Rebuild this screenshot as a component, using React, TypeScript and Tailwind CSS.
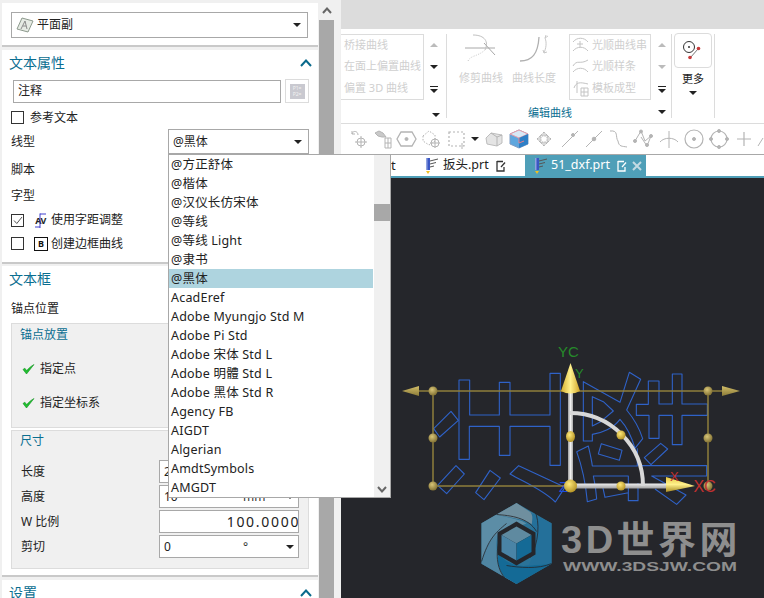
import React from "react";

const FONT = "font-['Noto_Sans','Noto_Sans_CJK_SC',sans-serif]";

const Tri = ({ c = "#222", w = 8, h = 4 }: { c?: string; w?: number; h?: number }) => (
  <svg width={w} height={h} viewBox="0 0 8 4" className="block shrink-0">
    <path d="M0 0H8L4 4Z" fill={c} />
  </svg>
);
const TriUp = ({ c = "#bbb" }: { c?: string }) => (
  <svg width={8} height={4} viewBox="0 0 8 4" className="block shrink-0">
    <path d="M0 4H8L4 0Z" fill={c} />
  </svg>
);
const TriBar = () => (
  <svg width={8} height={7} viewBox="0 0 8 7" className="block shrink-0">
    <path d="M0 0H8V1H0Z M0 3H8L4 7Z" fill="#222" />
  </svg>
);
const Chevron = () => (
  <svg width={12} height={8} viewBox="0 0 12 8" className="block">
    <path d="M1 7L6 1.5L11 7" fill="none" stroke="#0a6a8c" strokeWidth="2" />
  </svg>
);
const Check = () => (
  <svg width={13} height={12} viewBox="0 0 13 12" className="block">
    <path d="M1 6.5L4.5 11L12 1.5C8.5 3.5 6.5 5.5 4.7 7.6L2.8 5.2Z" fill="#20c030" stroke="#129020" strokeWidth=".6" />
  </svg>
);
const Box = ({ checked = false }: { checked?: boolean }) => (
  <span className="flex h-[13px] w-[13px] shrink-0 items-center justify-center border border-[#333] bg-white">
    {checked && (
      <svg width={10} height={9} viewBox="0 0 10 9">
        <path d="M1 4.5L3.8 7.5L9 1" fill="none" stroke="#555" strokeWidth="1" />
      </svg>
    )}
  </span>
);

const PlaneIcon = () => (
  <svg width={18} height={18} viewBox="0 0 18 18" className="block shrink-0">
    <path d="M6 2L17 5L12 16L1 13Z" fill="#e6ebe4" stroke="#8d9a8d" />
    <path d="M5 13L9 5L11 13M7 10H10" fill="none" stroke="#8a8a8a" />
  </svg>
);

const Section = ({ title, children, h, chevron = true, head = "h-[26px]" }: { title: string; children?: React.ReactNode; h: string; chevron?: boolean; head?: string }) => (
  <section className={`${h} shrink-0 border-b-2 border-b-[#c9c9c9] bg-white`}>
    <div className={`flex ${head} items-start justify-between pl-[7px] pr-[6px] pt-[3px]`}>
      <span className="text-[14px] leading-[20px] text-[#0a6e90]">{title}</span>
      {chevron && <span className="pt-[6px]"><Chevron /></span>}
    </div>
    {children}
  </section>
);

const FieldRow = ({ label, value, unit, arrow, clipped }: { label: string; value?: string; unit?: string; arrow?: boolean; clipped?: boolean }) => (
  <div className="flex h-[25px] items-center pl-[9px] pr-[9px]">
    <span className="w-[139px] text-[12px] text-[#222]">{label}</span>
    <div className={`flex h-[23px] w-[141px] items-center overflow-hidden whitespace-nowrap border border-[#a8a8a8] bg-white text-[#222] ${clipped ? "pl-[67px] text-[14px] tracking-[1.7px]" : "pl-[4px] pr-[4px] text-[12px]"}`}>
      <span className={clipped ? "" : "w-[79px]"}>{value}</span>
      {unit && <span className="text-[#333]">{unit}</span>}
      {arrow && <span className="ml-auto"><Tri /></span>}
    </div>
  </div>
);

function LeftPanel() {
  return (
    <div className="flex w-[319px] shrink-0 flex-col bg-[#f0f0f0] pl-[2px] pr-[1px] pt-[3px]">
      <div className="h-[44px] shrink-0 border-b-2 border-b-[#c9c9c9] bg-white pl-[9px] pr-[10px] pt-[9px]">
        <div className="flex h-[26px] items-center border border-[#a8a8a8] pl-[4px] pr-[6px] text-[12px] text-[#222]">
          <PlaneIcon />
          <span className="ml-[3px]">平面副</span>
          <span className="ml-auto"><Tri c="#222" /></span>
        </div>
      </div>
      <div className="h-[3px] shrink-0" />
      <Section title="文本属性" h="h-[214px]" head="h-[29px]">
        <div className="flex h-[24px] items-center gap-[4px] pl-[11px] pr-[9px]">
          <div className="flex h-[23px] flex-1 items-center border border-[#a8a8a8] pl-[4px] text-[12px] text-[#222]">注释</div>
          <div className="flex h-[24px] w-[24px] items-center justify-center border border-[#dcdcdc]">
            <div className="flex h-[15px] w-[15px] flex-col items-center justify-center bg-[#c9c9d0] text-[5px] leading-[6px] text-[#f2f2f2]">
              <span>P1=</span>
              <span>P2=</span>
            </div>
          </div>
        </div>
        <div className="flex h-[26px] items-center gap-[6px] pl-[9px] pt-[3px] text-[12px] text-[#222]">
          <Box />
          <span>参考文本</span>
        </div>
        <div className="flex h-[25px] items-center pl-[9px] pr-[9px] text-[12px] text-[#222]">
          <span className="w-[157px]">线型</span>
          <div className="flex h-[25px] flex-1 items-center justify-between border border-[#a8a8a8] pl-[4px] pr-[6px]">
            <span>@黑体</span>
            <Tri />
          </div>
        </div>
        <div className="flex h-[28px] items-center pl-[9px] pt-[3px] text-[12px] text-[#222]">脚本</div>
        <div className="flex h-[26px] items-center pl-[9px] pt-[1px] text-[12px] text-[#222]">字型</div>
        <div className="flex h-[24px] items-center pl-[9px] text-[12px] text-[#222]">
          <Box checked />
          <span className="relative ml-[9px] flex h-[15px] w-[15px] items-center justify-center text-[9px] font-bold leading-none tracking-[-.5px] text-[#222]">
            AV
            <svg width={15} height={15} viewBox="0 0 15 15" className="absolute left-0 top-0 block">
              <path d="M7 .5V15M7 1H13M7 14H2" fill="none" stroke="#2a2ac8" strokeWidth=".9" />
            </svg>
          </span>
          <span className="ml-[3px]">使用字距调整</span>
        </div>
        <div className="flex h-[23px] items-center pl-[9px] text-[12px] text-[#222]">
          <Box />
          <span className="ml-[10px] flex h-[14px] w-[14px] items-center justify-center border border-[#111] text-[9px] font-bold leading-none text-[#111]">B</span>
          <span className="ml-[3px]">创建边框曲线</span>
        </div>
      </Section>
      <div className="h-[2px] shrink-0" />
      <Section title="文本框" h="h-[311px]" chevron={false}>
        <div className="flex h-[31px] items-center pl-[9px] pt-[2px] text-[12px] text-[#222]">锚点位置</div>
        <div className="mx-[9px] flex h-[105px] flex-col border border-[#dcdcdc] bg-[#f0f0f0]">
          <div className="pl-[8px] pt-[1px] text-[12px] leading-[20px] text-[#0a6e90]">锚点放置</div>
          <div className="mt-[14px] flex h-[20px] items-center gap-[5px] pl-[10px] text-[12px] text-[#222]"><Check />指定点</div>
          <div className="mt-[14px] flex h-[20px] items-center gap-[5px] pl-[10px] text-[12px] text-[#222]"><Check />指定坐标系</div>
        </div>
        <div className="mx-[9px] mt-[2px] flex h-[139px] flex-col border border-[#dcdcdc] bg-[#f0f0f0]">
          <div className="h-[28px] shrink-0 pl-[8px] text-[12px] leading-[20px] text-[#0a6e90]">尺寸</div>
          <FieldRow label="长度" value="2" unit="mm" arrow />
          <FieldRow label="高度" value="10" unit="mm" arrow />
          <FieldRow label="W 比例" value="100.0000" clipped />
          <FieldRow label="剪切" value="0" unit="°" arrow />
        </div>
      </Section>
      <div className="h-[3px] shrink-0" />
      <Section title="设置" h="h-[40px]" />
    </div>
  );
}

const S = "#b4b4b4";
const I = ({ children, w = 22 }: { children: React.ReactNode; w?: number }) => (
  <svg width={w} height={22} viewBox="0 0 22 22" fill="none" stroke={S} strokeWidth="1" className="block shrink-0">
    {children}
  </svg>
);

function Toolbar() {
  return (
    <div className="flex h-[32px] shrink-0 items-center overflow-hidden border-b border-t border-b-[#a8a8a8] border-t-[#dcdcdc] bg-white pl-[7px]">
      <div className="flex w-[134px] shrink-0 items-center">
        <div className="w-[25px]"><I><path d="M4 6C5 2 10 3 10 7M4 6L4 3M4 6L7 6" /><circle cx="13" cy="14" r="4" /><path d="M13 8V20M7 14H19" /></I></div>
        <div className="w-[23px]"><I><path d="M2 5L6 3L10 5L13 9L9 9L5 8Z" fill="#c9c9c9" /><path d="M12 10H18V20H12ZM15 10V20M12 15H18" /></I></div>
        <div className="w-[24px]"><I><path d="M5 4H16L20 11L16 18H5L1 11Z" strokeWidth="1.3" /><circle cx="10.500" cy="11" r="1.500" fill={S} /></I></div>
        <div className="w-[27px]"><I><path d="M3 8L9 3L15 7V13L9 17L3 13Z" strokeDasharray="1.500 1.500" /><circle cx="15" cy="15" r="4" /><path d="M15 10V20M10 15H20" /></I></div>
        <div className="w-[24px]"><I><path d="M2 4H17V18H2Z" strokeDasharray="2 2" strokeWidth="1.200" /><path d="M15 15V21" /></I></div>
        <Tri />
      </div>
      <div className="ml-[1px] w-[25px] shrink-0"><I><path d="M3 10L8 5L19 7V15L14 18L4 16Z" fill="#e4e4e4" stroke="#bdbdbd" /><path d="M8 5L14 9V18M14 9L19 7" /></I></div>
      <div className="w-[25px] shrink-0">
        <svg width={22} height={22} viewBox="0 0 22 22" className="block">
          <path d="M11 2L20 6V16L11 20L2 16V6Z" fill="#5ea6de" stroke="#7f9cc4" />
          <path d="M2 6L11 10L20 6L11 2Z" fill="#d8e8f6" stroke="#e79ca8" />
          <path d="M11 10V20L20 16V6Z" fill="#2e7fc6" />
          <path d="M11 10V15L16 13" fill="none" stroke="#e8808c" />
        </svg>
      </div>
      <div className="w-[26px] shrink-0"><I><path d="M4 11L8 7L8 15ZM18 11L14 7L14 15ZM11 4L7 8H15ZM11 18L7 14H15Z" strokeDasharray="1.500 1" fill="#d9d9d9" /></I></div>
      <div className="w-[24px] shrink-0"><I><path d="M3 19L19 3" /><circle cx="14" cy="7" r="1.500" fill={S} /></I></div>
      <div className="w-[24px] shrink-0"><I><path d="M3 19L19 3" /><circle cx="11" cy="11" r="1.800" fill={S} /></I></div>
      <div className="w-[25px] shrink-0"><I><path d="M3 3C12 2 8 9 11 13C12 19 15 18 20 19" /></I></div>
      <div className="w-[26px] shrink-0"><I><path d="M3 13L9 3L13 13L19 8L15 18L9 9" /><circle cx="9" cy="3.500" r="1.500" fill={S} /><circle cx="3" cy="13" r="1.500" fill={S} /><circle cx="19" cy="8" r="1.500" fill={S} /><circle cx="15" cy="17" r="1.500" fill={S} /></I></div>
      <div className="w-[25px] shrink-0"><I><path d="M2 14C6 9 16 9 20 14M11 3V20" /></I></div>
      <div className="w-[25px] shrink-0"><I><circle cx="11" cy="11" r="9" strokeWidth="1.200" /><circle cx="11" cy="11" r="1.500" fill={S} /></I></div>
      <div className="w-[25px] shrink-0"><I><circle cx="11" cy="11" r="8" strokeWidth="1.200" /><circle cx="11" cy="3" r="1.500" fill={S} /><circle cx="3" cy="11" r="1.500" fill={S} /><circle cx="19" cy="11" r="1.500" fill={S} /><circle cx="11" cy="19" r="1.500" fill={S} /></I></div>
      <div className="w-[24px] shrink-0"><I><path d="M11 4V18M4 11H18" strokeWidth="1.200" /></I></div>
      <div className="w-[22px] shrink-0"><I><path d="M1 18L6 10" /></I></div>
    </div>
  );
}

const RibbonText = ({ children, h = "h-[22px]" }: { children: React.ReactNode; h?: string }) => (
  <div className={`flex ${h} items-center whitespace-nowrap pl-[3px] text-[11px] text-[#cfcfcf]`}>{children}</div>
);

const SmallCurve = ({ d }: { d: string }) => (
  <svg width={18} height={18} viewBox="0 0 18 18" fill="none" stroke="#c4c4c4" className="block shrink-0">
    <path d={d} />
  </svg>
);

function Ribbon() {
  return (
    <div className="flex h-[94px] shrink-0 items-stretch bg-white pt-[5px]">
      <div className="flex h-[84px] w-[106px] shrink-0 border-r border-r-[#dcdcdc]">
        <div className="flex w-[83px] flex-col">
          <div className="h-[66px] border border-l-0 border-[#dcdcdc]">
            <RibbonText h="h-[20px]">桥接曲线</RibbonText>
            <RibbonText>在面上偏置曲线</RibbonText>
            <RibbonText>偏置 3D 曲线</RibbonText>
          </div>
        </div>
        <div className="flex w-[22px] flex-col items-center pl-[1px]">
          <div className="flex h-[22px] items-center pr-[4px]"><TriUp /></div>
          <div className="flex h-[22px] items-center pr-[4px]"><Tri /></div>
          <div className="flex h-[22px] items-center pr-[4px]"><TriBar /></div>
          <div className="mt-[12px] flex h-[6px] items-center"><Tri /></div>
        </div>
      </div>
      <div className="flex h-[84px] w-[225px] shrink-0 flex-col border-r border-r-[#dcdcdc]">
        <div className="flex h-[66px] items-start">
          <div className="ml-[11px] flex w-[46px] flex-col items-center">
            <svg width={32} height={29} viewBox="0 0 32 29" fill="none" className="block">
              <path d="M0 14H30" stroke="#a8a8a8" />
              <path d="M8 1C20 1 24 8 20 16" stroke="#c0c0c0" />
              <path d="M19 9L30 21" stroke="#a8a8a8" />
              <path d="M3 27C6 21 12 23 20 16" stroke="#c8c8c8" strokeDasharray="1 1.500" />
            </svg>
            <span className="mt-[7px] whitespace-nowrap text-[11px] text-[#cfcfcf]">修剪曲线</span>
          </div>
          <div className="ml-[7px] flex w-[46px] flex-col items-center">
            <svg width={32} height={29} viewBox="0 0 32 29" fill="none" className="block">
              <path d="M2 27C14 27 20 20 21 3" stroke="#b0b0b0" strokeWidth="1.300" />
              <path d="M27 4L30 2M27 4L28 1M27 4C29 9 28 14 26 19M26 19L25 16M26 19L29 18" stroke="#c8c8c8" />
            </svg>
            <span className="mt-[7px] whitespace-nowrap text-[11px] text-[#cfcfcf]">曲线长度</span>
          </div>
          <div className="ml-[12px] flex h-[66px] w-[82px] flex-col border border-[#dcdcdc]">
            <div className="flex h-[20px] items-center gap-[2px] whitespace-nowrap pl-[2px] text-[11px] text-[#cfcfcf]"><SmallCurve d="M1 6C5 1 12 1 16 6M1 15C5 10 12 10 16 15M8 5V12M5 8H11" />光顺曲线串</div>
            <div className="flex h-[22px] items-center gap-[2px] whitespace-nowrap pl-[2px] text-[11px] text-[#cfcfcf]"><SmallCurve d="M1 9C5 2 8 8 16 3M1 15C5 10 12 10 16 15" />光顺样条</div>
            <div className="flex h-[22px] items-center gap-[2px] whitespace-nowrap pl-[2px] text-[11px] text-[#cfcfcf]"><SmallCurve d="M2 9C4 3 8 3 16 5M5 2V14M9 9H16V17H9ZM9 13H16M12 9V17" />模板成型</div>
          </div>
          <div className="ml-[3px] flex w-[16px] flex-col items-center">
            <div className="flex h-[22px] items-center"><TriUp /></div>
            <div className="flex h-[22px] items-center"><Tri c="#bbb" /></div>
            <div className="flex h-[22px] items-center"><TriBar /></div>
          </div>
        </div>
        <div className="flex flex-1 items-center">
          <span className="ml-[81px] mt-[5px] w-[44px] whitespace-nowrap text-center text-[11px] text-[#0a6e90]">编辑曲线</span>
          <span className="ml-[86px] mt-[3px]"><Tri /></span>
        </div>
      </div>
      <div className="flex h-[84px] w-[43px] shrink-0 flex-col items-center border-r border-r-[#dcdcdc]">
        <div className="-mt-[1px] flex h-[35px] w-[38px] items-center justify-center rounded-[4px] border border-[#dcdcdc]">
          <svg width={20} height={20} viewBox="0 0 20 20" fill="none" className="block">
            <circle cx="6" cy="6" r="5.500" stroke="#333" />
            <circle cx="6" cy="6" r="1" fill="#333" />
            <path d="M7 17L15 8" stroke="#777" />
            <circle cx="7" cy="16.500" r="1.800" fill="#c83c3c" />
            <circle cx="15.500" cy="7.500" r="1.800" fill="#c83c3c" />
          </svg>
        </div>
        <span className="mt-[2px] text-[11px] leading-[18px] text-[#222]">更多</span>
        <span className="mt-[3px]"><Tri /></span>
      </div>
    </div>
  );
}

const FileIcon = () => (
  <svg width={16} height={18} viewBox="0 0 16 18" className="block shrink-0">
    <path d="M3 1H7V13H3Z" fill="#3a57c4" />
    <path d="M3 1H4.500V13H3Z" fill="#8fa2e0" />
    <path d="M7 4L15 2M7 7L13 5.500M7 10L11 9" stroke="#555" fill="none" />
    <path d="M3 14H7L5 17Z" fill="#f0c020" />
  </svg>
);
const DocIcon = ({ c }: { c: string }) => (
  <svg width={12} height={12} viewBox="0 0 12 12" fill="none" stroke={c} strokeWidth="1.300" className="block shrink-0">
    <path d="M2 1.500H8M2 1V11H9V7" />
    <path d="M6 7L10 2.500" />
  </svg>
);

function Tabs() {
  return (
    <div className="flex h-[23px] shrink-0 border-b-2 border-b-[#4f9fb8] bg-white">
      <div className="h-[23px] w-[33px] shrink-0 bg-white" />
      <div className="flex h-[23px] w-[17px] shrink-0 items-start justify-center bg-[#f0f0f0] pt-[6px]">
        <svg width={10} height={7} viewBox="0 0 10 7"><path d="M1 6L5 1.500L9 6" fill="none" stroke="#555" strokeWidth="2" /></svg>
      </div>
      <span className="w-[32px] text-[13px] leading-[21px] text-[#222]">t</span>
      <div className="flex w-[102px] items-center text-[12.500px] text-[#222]">
        <FileIcon />
        <span className="ml-[4px]">扳头.prt</span>
        <span className="ml-[6px]"><DocIcon c="#333" /></span>
      </div>
      <div className="flex h-[21px] w-[121px] items-center bg-[#4f9fb8] pl-[7px] text-[12.500px] text-white">
        <FileIcon />
        <span className="ml-[3px]">51_dxf.prt</span>
        <span className="ml-[6px]"><DocIcon c="#fff" /></span>
        <svg width={10} height={10} viewBox="0 0 10 10" className="ml-[4px] block">
          <path d="M1 1L9 9M9 1L1 9" stroke="#c4dbe3" strokeWidth="2" />
        </svg>
      </div>
    </div>
  );
}

const Ball = ({ x, y, r = 4.500, id = "tan" }: { x: number; y: number; r?: number; id?: string }) => (
  <circle cx={x} cy={y} r={r} fill={`url(#${id})`} />
);

function Scene() {
  return (
    <svg viewBox="341 178 423 420" className="block h-full w-full">
      <defs>
        <radialGradient id="tan" cx="40%" cy="35%" r="70%">
          <stop offset="0" stopColor="#d8c577" />
          <stop offset="1" stopColor="#7d6c30" />
        </radialGradient>
        <radialGradient id="yel" cx="40%" cy="35%" r="70%">
          <stop offset="0" stopColor="#ffe97a" />
          <stop offset="1" stopColor="#b08e20" />
        </radialGradient>
        <linearGradient id="cone" x1="0" x2="1" y1="0" y2="0">
          <stop offset="0" stopColor="#d4ae30" />
          <stop offset=".5" stopColor="#fff08c" />
          <stop offset="1" stopColor="#d0a428" />
        </linearGradient>
        <linearGradient id="coneX" x1="0" x2="0" y1="0" y2="1">
          <stop offset="0" stopColor="#e8c840" />
          <stop offset=".5" stopColor="#fff08c" />
          <stop offset="1" stopColor="#a88a20" />
        </linearGradient>
        <linearGradient id="coneT" x1="0" x2="0" y1="0" y2="1">
          <stop offset="0" stopColor="#d2bd68" />
          <stop offset="1" stopColor="#8a7a38" />
        </linearGradient>
        <linearGradient id="axisV" x1="0" x2="1" y1="0" y2="0">
          <stop offset="0" stopColor="#9c9c9c" />
          <stop offset=".5" stopColor="#f0f0f0" />
          <stop offset="1" stopColor="#a8a8a8" />
        </linearGradient>
        <linearGradient id="axisH" x1="0" x2="0" y1="0" y2="1">
          <stop offset="0" stopColor="#f0f0f0" />
          <stop offset="1" stopColor="#a0a0a0" />
        </linearGradient>
      </defs>
      <rect x="341" y="178" width="423" height="420" fill="#25262b" />

      <g transform="translate(400 340) scale(.33333)" fill="none" stroke="#2f62c8" strokeWidth="3.300" strokeLinejoin="round">
        <path d="M177 120H209V225H298V127H330V225H450V100H481V376H450V259H330V346H298V259H208V358H177Z" />
        <path d="M153 214L175 241L119 291L101 266Z" />
        <path d="M168 377L193 402L140 461L113 436Z" />
        <path d="M270 391L301 414L252 479L227 458Z" />
        <path d="M356 377L495 442L466 486C430 450 380 430 330 402Z" />
      </g>
      <g transform="translate(560 340) scale(.33333)" fill="none" stroke="#2f62c8" strokeWidth="3.300" strokeLinejoin="round">
        <path d="M70 125L180 187L208 97L242 118L200 210C225 240 240 270 248 296L225 325C215 290 200 260 180 238C160 265 125 280 97 283V303H70Z" />
        <path d="M97 170L130 185L160 213L122 245L97 258Z" />
        <path d="M229 193H265V123H297V192H337V102H366V192H442V226H366V314H337V226H297V295H267V226H229Z" />
        <path d="M124 311L186 331L178 361L115 342Z" />
        <path d="M302 310L323 327L273 374L253 353Z" />
        <path d="M50 335L85 318C90 340 95 360 97 378H232V325M245 377H440V408H275L378 465L350 493L285 447" />
        <path d="M50 335C70 390 78 440 82 485L110 477C108 450 104 425 100 408H205V482H234V430M205 458L135 472L128 440" />
      </g>

      <path d="M415 391H725M433 391V486H570M708 391V486" fill="none" stroke="#8f7f3c" strokeWidth="1.500" />
      <path d="M402 391L419 386V396Z" fill="url(#coneT)" />
      <path d="M740 391L722 386V396Z" fill="url(#coneT)" />
      <Ball x={433} y={391} />
      <Ball x={433} y={438} />
      <Ball x={433} y={486} />
      <Ball x={708} y={391} />
      <Ball x={708} y={438} />
      <Ball x={708} y={486} />

      <rect x="568" y="392" width="5" height="94" fill="url(#axisV)" />
      <rect x="570" y="483.500" width="98" height="5" fill="url(#axisH)" />
      <path d="M570 413A73 73 0 0 1 643 486" stroke="#d8d8d8" strokeWidth="4" fill="none" />
      <path d="M570.500 363L561 391Q570.500 396 580 391Z" fill="url(#cone)" />
      <path d="M695 486L666 477V492Z" fill="url(#coneX)" />
      <ellipse cx="570.500" cy="436.500" rx="4.500" ry="5.500" fill="url(#yel)" />
      <Ball x={621} y={435} id="yel" />
      <Ball x={621} y={486} id="yel" />
      <text x="558" y="357" fontSize="15" fill="#258a2a" fontFamily="Liberation Sans, sans-serif">YC</text>
      <text x="575" y="378" fontSize="13" fill="#258a2a" fontFamily="Liberation Sans, sans-serif">Y</text>
      <text x="670" y="481" fontSize="13" fill="#c03030" fontFamily="Liberation Sans, sans-serif">X</text>
      <text x="693.500" y="492" fontSize="16" fill="#c03030" fontFamily="Liberation Sans, sans-serif">XC</text>
      <text x="559" y="492" fontSize="15" fill="#1c4ce0" fontFamily="Liberation Sans, sans-serif">Z</text>
      <Ball x={570.5} y={486} r={6.5} id="yel" />

      <g transform="translate(516.500 543.500)">
        <path d="M0 -40.500L35 -20.250L35 20.250L0 40.500L-35 20.250L-35 -20.250Z" fill="#2b7398" />
        <path d="M0 -40.500L-20 -29C-10 -26 6 -26 18 -18L16 -30Z" fill="#6f8f9f" />
        <path d="M-35 -20.250L-20 -29C-10 -26 2 -25 10 -20L-16 -10C-24 -8 -32 8 -35 20.250Z" fill="#5c8da6" />
        <path d="M-35 20.250C-32 8 -26 -6 -18 -10C-22 0 -20 14 -14 24L-4 36L0 40.500Z" fill="#4f85a2" />
        <path d="M0 40.500L-12 33.500C-18 26 -20 18 -18 8C-14 18 -2 24 12 22L35 20.250Z" fill="#146a96" />
        <path d="M35 20.250L12 22C18 12 20 -2 16 -14C14 -22 18 -26 14 -31L35 -20.250Z" fill="#24709a" />
        <path d="M-20 -29C-6 -28 12 -26 20 -12M18 -33C24 -22 22 0 14 14M35 20C22 26 2 24 -10 22M-12 34C-22 22 -20 4 -16 -8M-35 18C-28 -4 -22 -10 -10 -20" stroke="#25262b" strokeWidth=".8" fill="none" />
        <path d="M0 -22L19 -11V11L0 22L-19 11V-11Z" fill="#25262b" />
        <path d="M0 -17L15 -8.500L0 0L-15 -8.500Z" fill="#5f8aa0" />
        <path d="M-15 -8.500L0 0V17L-15 8.500Z" fill="#4a84a6" />
        <path d="M15 -8.500L0 0V17L15 8.500Z" fill="#146a96" />
      </g>
      <text x="561" y="553" fontSize="38" fontWeight="700" letterSpacing="3.500" fill="#8e8e8e" fontFamily="Liberation Sans, Noto Sans CJK SC, sans-serif">3D世界网</text>
      <text x="563" y="571" fontSize="12" fontWeight="700" textLength="174" lengthAdjust="spacingAndGlyphs" fill="#8e8e8e" fontFamily="Liberation Sans, sans-serif">WWW.3DSJW.COM</text>
    </svg>
  );
}

const fonts = ["@方正舒体", "@楷体", "@汉仪长仿宋体", "@等线", "@等线 Light", "@隶书", "@黑体", "AcadEref", "Adobe Myungjo Std M", "Adobe Pi Std", "Adobe 宋体 Std L", "Adobe 明體 Std L", "Adobe 黑体 Std R", "Agency FB", "AIGDT", "Algerian", "AmdtSymbols", "AMGDT"];

function FontList() {
  return (
    <div className="absolute left-[168px] top-[154px] flex h-[344px] w-[223px] border border-[#a8a8a8] bg-white">
      <ul className="w-[205px] overflow-hidden">
        {fonts.map((f) => (
          <li key={f} className={`mr-[1px] h-[19px] whitespace-nowrap pl-[2px] text-[12.500px] leading-[19px] tracking-[.2px] text-[#222] ${f === "@黑体" ? "bg-[#aed4df]" : ""}`}>
            {f}
          </li>
        ))}
      </ul>
      <div className="flex w-[16px] flex-col bg-[#f0f0f0]">
        <div className="mt-[49px] h-[17px] bg-[#a8a8a8]" />
        <div className="mt-auto flex h-[16px] items-center justify-center">
          <svg width={10} height={7} viewBox="0 0 10 7"><path d="M1 1L5 5.500L9 1" fill="none" stroke="#666" strokeWidth="2" /></svg>
        </div>
      </div>
    </div>
  );
}

export default function App() {
  return (
    <div className={`relative flex h-[598px] w-[764px] overflow-hidden bg-[#f0f0f0] ${FONT}`}>
      <LeftPanel />
      <div className="flex w-[15px] shrink-0 flex-col">
        <div className="flex h-[20px] items-center justify-center">
          <svg width={10} height={7} viewBox="0 0 10 7"><path d="M1 6L5 1.500L9 6" fill="none" stroke="#666" strokeWidth="2" /></svg>
        </div>
        <div className="flex-1 bg-[#a8a8a8]" />
      </div>
      <div className="w-[7px] shrink-0" />
      <div className="flex min-w-0 flex-1 flex-col">
        <div className="h-[29px] shrink-0 bg-[#dcdcdc]" />
        <Ribbon />
        <Toolbar />
        <Tabs />
        <div className="min-h-0 flex-1">
          <Scene />
        </div>
      </div>
      <FontList />
    </div>
  );
}
